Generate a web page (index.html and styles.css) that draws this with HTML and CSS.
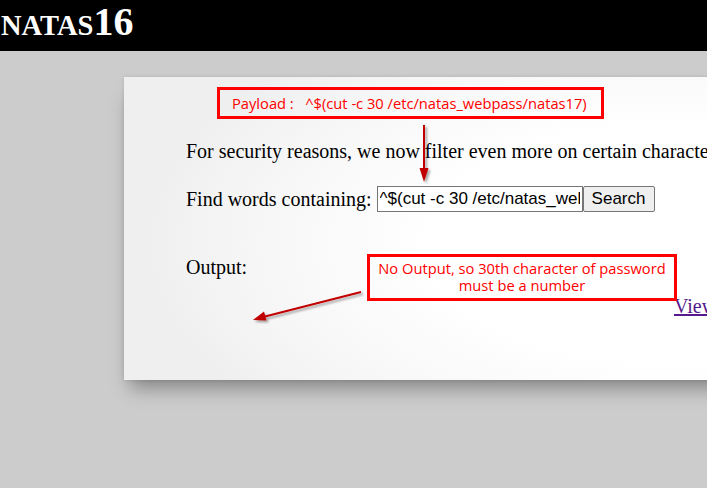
FILE: index.html
```html
<!DOCTYPE html>
<html>
<head>
<meta charset="utf-8">
<link rel="stylesheet" href="styles.css">
</head>
<body>
<header class="top"><h1 class="logo"><span class="logo-word">NATAS</span>16</h1></header>
<main class="card">
  <div class="content">
    <p class="line">For security reasons, we now filter even more on certain characters</p>
    <form class="search">
      <span class="label">Find words containing:</span>
      <input class="needle" name="needle" value="^$(cut -c 30 /etc/natas_webpass/natas17)">
      <input class="submit" type="submit" value="Search">
    </form>
    <p class="line output">Output:</p>
    <div class="viewsource"><a href="#">View sourcecode</a></div>
  </div>
</main>

<div class="note note-payload">Payload :&nbsp;&nbsp; ^$(cut -c 30 /etc/natas_webpass/natas17)</div>
<div class="note note-output">No Output, so 30th character of password<br>must be a number</div>

<svg class="arrows" width="707" height="488" viewBox="0 0 707 488">
  <defs>
    <filter id="sh" x="-50%" y="-50%" width="200%" height="200%">
      <feDropShadow dx="2" dy="2" stdDeviation="1.2" flood-color="#000" flood-opacity="0.35"/>
    </filter>
  </defs>
  <g filter="url(#sh)" fill="#c00000" stroke="#c00000">
    <line x1="424" y1="125" x2="424" y2="170" stroke-width="2"/>
    <polygon points="419.5,168 428.5,168 424,182" stroke="none"/>
    <line x1="361" y1="292" x2="265" y2="316.5" stroke-width="2"/>
    <polygon points="253,320 264,311.5 266.5,320.5" stroke="none"/>
  </g>
</svg>
</body>
</html>
```
FILE: styles.css
```css
html, body {
  margin: 0;
  padding: 0;
}
body {
  background: #cccccc;
  width: 707px;
  height: 488px;
  overflow: hidden;
  position: relative;
  font-family: "Liberation Serif", "Times New Roman", serif;
}
.top {
  background: #000;
  height: 51px;
  overflow: hidden;
}
.logo {
  margin: 0;
  padding: 2px 0 0 1px;
  color: #fff;
  font-family: "Liberation Serif", "Times New Roman", serif;
  font-weight: bold;
  font-size: 40px;
  line-height: 40px;
  white-space: nowrap;
}
.logo-word {
  font-size: 28.5px;
}
.card {
  display: block;
  margin: 26px 0 0 124px;
  width: 900px;
  height: 303px;
  background: radial-gradient(ellipse 520px 260px at 60% 55%, #ffffff 45%, #f6f6f6 80%, #efefef 100%);
  box-shadow: 0 14px 18px -6px rgba(0, 0, 0, 0.35), 0 0 4px rgba(0, 0, 0, 0.12);
}
.content {
  padding: 63px 0 0 62px;
  font-size: 20px;
  color: #000;
}
.line {
  margin: 0;
  line-height: 23px;
  white-space: nowrap;
}
.search {
  margin: 23px 0 0 0;
  display: flex;
  align-items: center;
  height: 26px;
  white-space: nowrap;
}
.label {
  line-height: 23px;
  margin-right: 5px;
}
.needle {
  box-sizing: border-box;
  width: 206px;
  height: 26px;
  margin: 0;
  padding: 1px 2px;
  border: 1px solid #767676;
  border-radius: 0;
  font-family: "Liberation Sans", Arial, sans-serif;
  font-size: 17px;
  color: #000;
  background: #fff;
}
.submit {
  box-sizing: border-box;
  width: 72px;
  height: 26px;
  margin: 0;
  padding: 1px 6px;
  border: 1px solid #767676;
  border-radius: 2px;
  background: #efefef;
  font-family: "Liberation Sans", Arial, sans-serif;
  font-size: 17px;
  color: #000;
}
.output {
  margin-top: 44px;
}
.viewsource {
  margin: 16px 0 0 488px;
  line-height: 23px;
  white-space: nowrap;
}
.viewsource a {
  color: #551a8b;
}
.note {
  position: absolute;
  box-sizing: border-box;
  border: 3px solid #ff0000;
  color: #ff0000;
  font-family: "Open Sans", "Noto Sans", sans-serif;
  font-size: 14.7px;
  background: transparent;
}
.note-payload {
  left: 217px;
  top: 87px;
  width: 387px;
  height: 32px;
  padding: 0 0 0 12px;
  line-height: 26px;
  white-space: nowrap;
}
.note-output {
  left: 367px;
  top: 254px;
  width: 310px;
  height: 47px;
  padding-top: 3px;
  text-align: center;
  line-height: 17px;
  white-space: nowrap;
}
.arrows {
  position: absolute;
  left: 0;
  top: 0;
  pointer-events: none;
}
```
